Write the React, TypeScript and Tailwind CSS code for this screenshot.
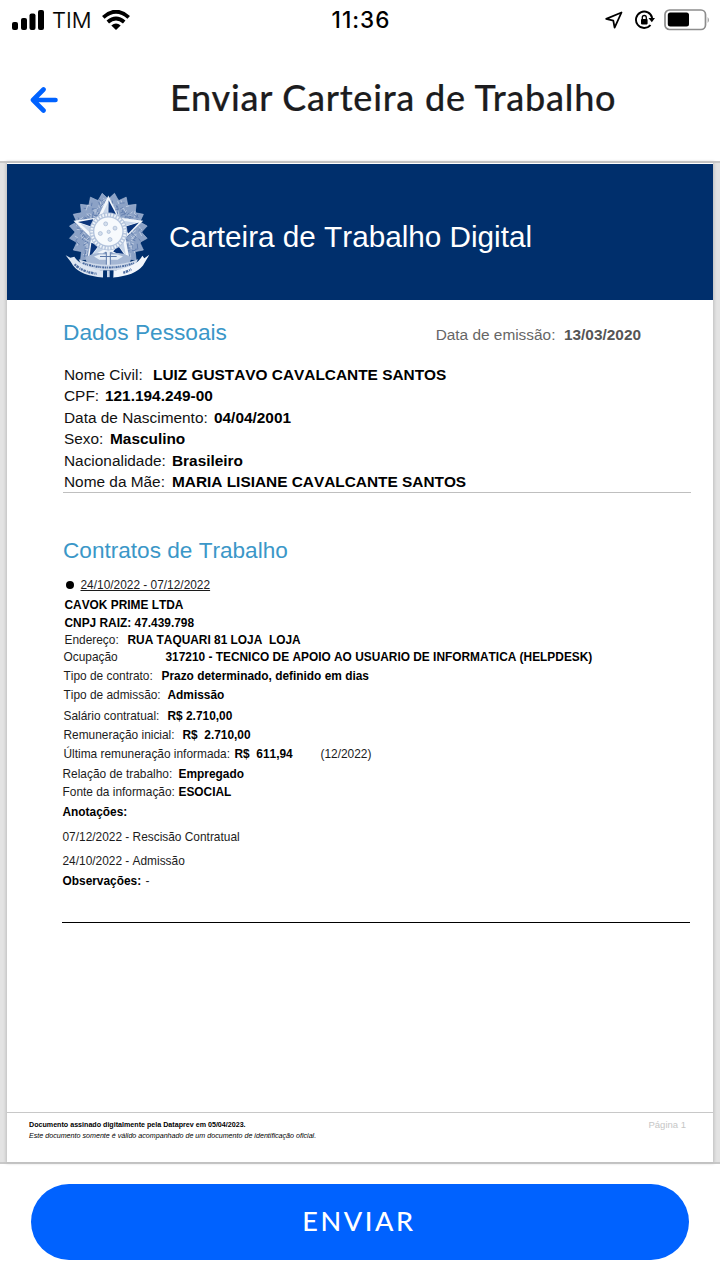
import React from "react";

type Field = { row: string; label: string; labelClass: string; value?: string; valueClass?: string; extra?: string };

const personal: Field[] = [
  { row: "", label: "Nome Civil:", labelClass: "w-[89px]", value: "LUIZ GUSTAVO CAVALCANTE SANTOS", valueClass: "" },
  { row: "", label: "CPF:", labelClass: "w-[41px]", value: "121.194.249-00", valueClass: "" },
  { row: "", label: "Data de Nascimento:", labelClass: "w-[150px]", value: "04/04/2001", valueClass: "" },
  { row: "", label: "Sexo:", labelClass: "w-[46px]", value: "Masculino", valueClass: "" },
  { row: "", label: "Nacionalidade:", labelClass: "w-[108px]", value: "Brasileiro", valueClass: "" },
  { row: "", label: "Nome da Mãe:", labelClass: "w-[108px]", value: "MARIA LISIANE CAVALCANTE SANTOS", valueClass: "" },
];

const contract: Field[] = [
  { row: "mt-1 pl-[2px]", label: "CAVOK PRIME LTDA", labelClass: "font-bold text-black" },
  { row: "mt-[2px] pl-[2px]", label: "CNPJ RAIZ: 47.439.798", labelClass: "font-bold text-black" },
  { row: "mt-px pl-[2px]", label: "Endereço:", labelClass: "w-[63px]", value: "RUA TAQUARI 81 LOJA  LOJA", valueClass: "" },
  { row: "mt-px pl-px", label: "Ocupação", labelClass: "w-[102px]", value: "317210 - TECNICO DE APOIO AO USUARIO DE INFORMATICA (HELPDESK)", valueClass: "" },
  { row: "mt-[3px] pl-px", label: "Tipo de contrato:", labelClass: "w-[98px]", value: "Prazo determinado, definido em dias", valueClass: "" },
  { row: "mt-[3px] pl-px", label: "Tipo de admissão:", labelClass: "w-[104px]", value: "Admissão", valueClass: "" },
  { row: "mt-[5px] pl-px", label: "Salário contratual:", labelClass: "w-[104px]", value: "R$ 2.710,00", valueClass: "" },
  { row: "mt-[3px] pl-px", label: "Remuneração inicial:", labelClass: "w-[119px]", value: "R$  2.710,00", valueClass: "" },
  { row: "mt-[3px] pl-px", label: "Última remuneração informada:", labelClass: "w-[171px]", value: "R$  611,94", valueClass: "w-[86px]", extra: "(12/2022)" },
  { row: "mt-1", label: "Relação de trabalho:", labelClass: "w-[116px]", value: "Empregado", valueClass: "" },
  { row: "mt-[2px]", label: "Fonte da informação:", labelClass: "w-[116px]", value: "ESOCIAL", valueClass: "" },
  { row: "mt-1", label: "Anotações:", labelClass: "font-bold text-black" },
  { row: "mt-[9px]", label: "07/12/2022 - Rescisão Contratual", labelClass: "" },
  { row: "mt-2", label: "24/10/2022 - Admissão", labelClass: "" },
  { row: "mt-1", label: "Observações:", labelClass: "w-[83px] font-bold text-black", extra: "-" },
];

function FieldRow({ f }: { f: Field }) {
  return (
    <div className={"flex whitespace-pre " + f.row}>
      <span className={"shrink-0 " + f.labelClass}>{f.label}</span>
      {f.value && <span className={"shrink-0 font-bold text-black " + f.valueClass}>{f.value}</span>}
      {f.extra && <span>{f.extra}</span>}
    </div>
  );
}

function polar(r: number, deg: number) {
  const a = (deg * Math.PI) / 180;
  return `${(205 + r * Math.sin(a)).toFixed(1)},${(185 - r * Math.cos(a)).toFixed(1)}`;
}

function Emblem() {
  const wreath: string[] = [];
  for (let i = 0; i < 20; i++) {
    const d = i * 18 + 9;
    wreath.push(polar(101, d - 8), polar(118, d), polar(101, d + 8));
  }
  const leaves: { p: string; light: boolean }[] = [];
  for (let i = 0; i < 260; i++) {
    const d = i * 137.5;
    const r = 58 + ((i * i * 13 + i * 7) % 45);
    const t = ((i * 7) % 5) - 2;
    leaves.push({ p: `M${polar(r, d)}L${polar(r + 6, d + t * 3)}`, light: i % 2 === 0 });
  }
  const points = [0, 72, 144, 216, 288];
  return (
    <svg viewBox="75 65 255 260" className="h-[87px] w-[85px]" aria-hidden="true">
      <polygon points={wreath.join(" ")} fill="#8ca2c6" stroke="#a9bad6" strokeWidth="2" />
      {leaves.map((l, i) => (
        <path key={i} d={l.p} stroke={l.light ? "#bccae0" : "#6480b0"} strokeWidth="3" strokeLinecap="round" />
      ))}
      {points.map((d) => (
        <g key={d}>
          <polygon points={`${polar(110, d)} ${polar(54, d - 36)} 205,185 ${polar(54, d + 36)}`} fill="#f2f6fb" />
          <polygon points={`${polar(96, d + 0.5)} ${polar(60, d + 22)} ${polar(50, d)}`} fill="#0a347a" />
          <polygon points={`${polar(88, d - 1)} ${polar(55, d - 20)} ${polar(50, d - 2)}`} fill="#c6d4e8" />
        </g>
      ))}
      <circle cx="205" cy="183" r="57" fill="#b3c3dc" />
      <circle cx="205" cy="183" r="50" fill="none" stroke="#eef3f9" strokeWidth="8" strokeDasharray="5 4" />
      <circle cx="205" cy="183" r="42" fill="#f7fafd" />
      <g fill="#d3deec" stroke="#8fa4c6" strokeWidth="1.5">
        <circle cx="197" cy="160" r="6" />
        <circle cx="225" cy="173" r="6" />
        <circle cx="181" cy="189" r="6" />
        <circle cx="206" cy="184" r="5" />
        <circle cx="210" cy="207" r="6" />
      </g>
      <path d="M136 262Q165 240 198 252L205 240L212 252Q245 240 274 262L270 276Q205 296 140 276z" fill="#a4b6d3" />
      <path d="M198 240h15v12h20l16 6-16 10h-20v22h-15v-22h-20l-16-10 16-6h20z" fill="#e6edf6" />
      <path d="M180 258h50M199 245v40M211 245v40" stroke="#5b78a8" strokeWidth="3" />
      <path d="M116 266Q205 300 294 266L284 287Q205 314 126 287z" fill="#cfdaea" />
      <path d="M128 278Q205 304 282 278" fill="none" stroke="#4a6aa0" strokeWidth="6" strokeDasharray="6 2 4 2 3 3" />
      <path d="M77 254L91 262L103 259Q122 290 190 301L189 321Q122 316 99 285L92 274z" fill="#dde6f2" />
      <path d="M328 253L313 263L307 256Q291 289 220 301L219 321Q284 316 309 285z" fill="#f2f6fb" />
      <path d="M104 281Q124 303 170 310M250 307Q262 303 274 296" fill="none" stroke="#4d6da1" strokeWidth="7" strokeDasharray="6 2 8 3 3 2" />
      <path d="M190 300h30v21h-30z" fill="#002f6c" />
      <path d="M201 300h8v20h-8z" fill="#c6d4e8" />
    </svg>
  );
}

export default function App() {
  return (
    <div className="flex h-[1280px] w-[720px] flex-col overflow-hidden bg-white font-['Liberation_Sans',Arial,sans-serif] text-black [font-kerning:none]">
      <div className="grid h-10 shrink-0 grid-cols-3 items-center pr-[10px] pl-3 font-['Inter',sans-serif]">
        <div className="flex items-center">
          <svg viewBox="0 0 32 20" className="h-5 w-8">
            <rect x="0" y="12" width="6" height="8" rx="2" />
            <rect x="9" y="8" width="6" height="12" rx="2" />
            <rect x="17.500" y="3.500" width="6" height="16.500" rx="2" />
            <rect x="26" y="0" width="6" height="20" rx="2" />
          </svg>
          <span className="ml-2 text-[22px] leading-10 [-webkit-text-stroke:0.2px_#000] font-light">TIM</span>
          <svg viewBox="0 0 28 20" className="ml-[10px] h-5 w-7" fill="none" stroke="#000" strokeWidth="3.800">
            <path d="M1.300 7.300Q14-4 26.700 7.300" />
            <path d="M5.800 12Q14 5 22.200 12" />
            <path d="M14 20L9.300 15.500Q14 11.500 18.700 15.500z" fill="#000" stroke="none" />
          </svg>
        </div>
        <span className="text-center text-[22.5px] leading-10 font-medium tracking-[1px]">11:36</span>
        <div className="flex items-center justify-end">
          <svg viewBox="0 0 18 18" className="h-[18px] w-[18px]" fill="none" stroke="#000" strokeWidth="1.800" strokeLinejoin="round">
            <path d="M16.500 1.500L1.200 7.800L8.300 9.700L9.600 16.600z" />
          </svg>
          <svg viewBox="0 0 20 20" className="ml-3 h-5 w-5">
            <path d="M15.500 15A8.200 8.200 0 1 1 17.200 8" fill="none" stroke="#000" strokeWidth="1.900" />
            <path d="M13.500 8h6.500l-3.200 4.300z" />
            <rect x="6" y="9" width="6.600" height="5.400" rx=".8" />
            <path d="M7.300 9.500V7.500a2 2 0 0 1 4 0v2" fill="none" stroke="#000" strokeWidth="1.300" />
          </svg>
          <svg viewBox="0 0 46 22" className="ml-[9px] h-[22px] w-[46px]">
            <rect x="1" y="1" width="40.500" height="19.500" rx="4.500" fill="#fff" stroke="#8d8d8d" strokeWidth="1.700" />
            <rect x="3.800" y="3.500" width="21.200" height="14" rx="2.500" />
            <path d="M43.700 8q2.300 3 0 6z" fill="#8d8d8d" />
          </svg>
        </div>
      </div>

      <header className="flex h-[121px] shrink-0 items-center pb-[2px] pl-[30px]">
        <svg viewBox="0 0 28 28" className="h-7 w-7" fill="none" stroke="#0062ff" strokeWidth="4.600" strokeLinecap="round" strokeLinejoin="round">
          <path d="M25.500 14H4M13.500 3.500L3 14l10.500 10.500" />
        </svg>
        <h1 className="ml-28 pb-[5px] font-['Lato',sans-serif] text-[36px] leading-[44px] font-medium tracking-[0.75px] whitespace-nowrap text-[#1c1c1e] [font-kerning:normal] [-webkit-text-stroke:0.2px_#1c1c1e]">Enviar Carteira de Trabalho</h1>
      </header>

      <main className="flex h-[1003px] shrink-0 border-y-2 border-[#c8c8c8] bg-[#e3e3e3] px-[7px]">
        <article className="flex flex-1 flex-col bg-white shadow-[0_0_3px_1px_#bdbdbd]">
          <div className="mt-px flex h-[136px] shrink-0 items-center bg-[#002f6c] pt-[6px] pl-[58px]">
            <Emblem />
            <span className="ml-[19px] pt-[3px] text-[29.7px] leading-9 whitespace-nowrap text-white">Carteira de Trabalho Digital</span>
          </div>

          <section className="mr-[22px] ml-14 h-[193px] shrink-0 border-b border-[#bfbfbf]">
            <div className="flex h-16 items-center justify-between pr-[50px]">
              <h2 className="text-[22.7px] text-[#3b97c8]">Dados Pessoais</h2>
              <p className="pt-[5px] text-[15.4px] whitespace-pre text-[#666]">
                Data de emissão:  <b className="text-[#555]">13/03/2020</b>
              </p>
            </div>
            <div className="pl-px text-[15.4px] leading-[21.4px] text-[#111]">
              {personal.map((f) => <FieldRow key={f.label} f={f} />)}
            </div>
          </section>

          <section className="mr-[23px] ml-[55px] h-[430px] shrink-0 border-b border-black">
            <h2 className="pt-11 pl-px text-[22.6px] leading-7 text-[#3b97c8]">Contratos de Trabalho</h2>
            <div className="mt-3 pl-[0.5px] text-[11.9px] leading-4 text-[#1c1c1c]">
              <div className="flex items-center pl-[3px]">
                <span className="h-2 w-2 rounded-full bg-black" />
                <span className="ml-[7px] underline">24/10/2022 - 07/12/2022</span>
              </div>
              {contract.map((f) => <FieldRow key={f.label} f={f} />)}
            </div>
          </section>

          <footer className="mt-auto flex h-[50px] shrink-0 justify-between border-t border-[#c8c8c8] pt-[6px] pr-[27px] pl-[22px]">
            <div className="pt-px text-[7.13px] leading-[11px]">
              <p className="font-bold">Documento assinado digitalmente pela Dataprev em 05/04/2023.</p>
              <p className="italic">Este documento somente é válido acompanhado de um documento de identificação oficial.</p>
            </div>
            <span className="text-[9.5px] leading-3 text-[#c6c6c6]">Página 1</span>
          </footer>
        </article>
      </main>

      <div className="flex flex-1 items-start px-[31px] pt-5">
        <button className="h-[76px] w-full rounded-full bg-[#0062ff] pr-[2px] pb-[2px] font-['Lato',sans-serif] text-[27px] font-medium tracking-[2.6px] text-white">ENVIAR</button>
      </div>
    </div>
  );
}
